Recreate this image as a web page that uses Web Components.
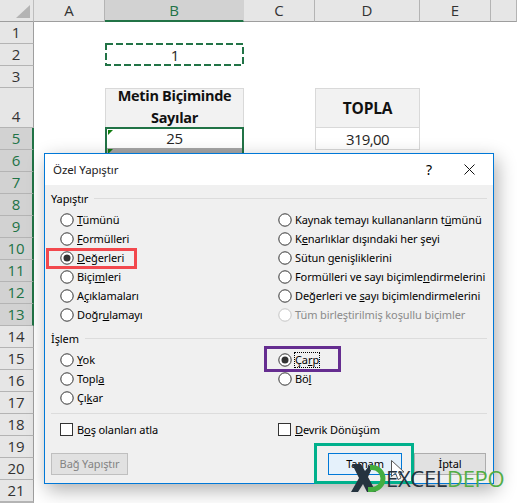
<!DOCTYPE html>
<html lang="tr">
<head>
<meta charset="utf-8">
<title>Özel Yapıştır</title>
<style>
  html, body { margin: 0; padding: 0; background: #fff; }
  body { width: 517px; height: 503px; overflow: hidden; position: relative; font-family: "Open Sans", "Noto Sans", sans-serif; }
</style>
</head>
<body>
<excel-sheet></excel-sheet>
<paste-dialog></paste-dialog>
<excel-logo></excel-logo>

<script>
const UI_FONT = '"Noto Sans", "Open Sans", sans-serif';
const SHEET_FONT = '"Open Sans", "Noto Sans", sans-serif';

/**
 * The worksheet behind the dialog: column headers, row headers and the few filled cells.
 */
class ExcelSheet extends HTMLElement {
    constructor() {
        super();
        this.attachShadow({ mode: 'open' });
    }

    connectedCallback() {
        const columns = ['A', 'B', 'C', 'D', 'E', ''];
        const rows = Array.from({ length: 22 }, (_, i) => i + 1);

        this.shadowRoot.innerHTML = `
            <style>
                :host {
                    display: block;
                    width: 517px;
                    height: 503px;
                    overflow: hidden;
                    font: 15px ${SHEET_FONT};
                    color: #262626;
                }
                .grid {
                    display: grid;
                    grid-template-columns: 34px 71px 139px 71px 105px 71px 26px;
                    grid-template-rows: 22px 22px 22px 22px 40px repeat(17, 22px) 1px;
                }
                .corner, .col, .row { background: #e6e6e6; box-sizing: border-box; }
                .corner { border-bottom: 1px solid #9e9e9e; border-right: 1px solid #bdbdbd; position: relative; }
                .corner::after {
                    content: '';
                    position: absolute;
                    right: 3px;
                    bottom: 3px;
                    border-style: solid;
                    border-width: 0 0 13px 14px;
                    border-color: transparent transparent #b4b4b4 transparent;
                }
                .col {
                    display: flex;
                    align-items: center;
                    justify-content: center;
                    border-bottom: 1px solid #9e9e9e;
                    border-right: 1px solid #b4b4b4;
                    color: #333;
                    padding-bottom: 1px;
                }
                .col.on { background: #d2d2d2; color: #217346; border-bottom: 2px solid #217346; border-right-color: #d2d2d2; }
                .row {
                    grid-column: 1;
                    display: flex;
                    align-items: flex-end;
                    justify-content: center;
                    border-bottom: 1px solid #b4b4b4;
                    border-right: 1px solid #9e9e9e;
                    color: #333;
                    line-height: 22px;
                    padding-right: 1px;
                }
                .row.on { background: #d2d2d2; color: #217346; border-right: 2px solid #217346; padding-right: 0; }
                .cell {
                    box-sizing: border-box;
                    display: flex;
                    align-items: center;
                    justify-content: center;
                    text-align: center;
                    line-height: 22px;
                }
                .copied { grid-column: 3; grid-row: 3; position: relative; padding-left: 1px; }
                .copied svg { position: absolute; left: 0; top: -1px; }
                .head { background: #f2f2f2; border: 1px solid #d9d9d9; font-weight: 700; font-size: 14.5px; letter-spacing: -.3px; color: #111; }
                .head.wrap { grid-column: 3; grid-row: 5; align-items: flex-end; border-bottom: 0; }
                .head.wrap span { margin-bottom: -1px; }
                .head.sum { grid-column: 5; grid-row: 5; font-size: 15.5px; letter-spacing: -.2px; }
                .val { border: 1px solid #d9d9d9; border-top: 0; letter-spacing: -.6px; }
                .val.sum { grid-column: 5; grid-row: 6; }
                .sel {
                    grid-column: 3;
                    grid-row: 6;
                    position: relative;
                    margin: -1px 0 0 0;
                    border: 2px solid #217346;
                    border-bottom: 0;
                    height: 30px;
                    display: block;
                    background: linear-gradient(#fff 0 19px, #a6a6a6 19px);
                    line-height: 19px;
                    letter-spacing: -.4px;
                }
                .sel::before, .sel::after {
                    content: '';
                    position: absolute;
                    left: 1px;
                    border-style: solid;
                    border-width: 5px 5px 0 0;
                    border-color: #107c10 transparent transparent transparent;
                }
                .sel::before { top: 1px; }
                .sel::after { top: 20px; }
            </style>
            <div class="grid">
                <div class="corner"></div>
                ${columns.map(c => `<div class="col ${c === 'B' ? 'on' : ''}">${c}</div>`).join('')}
                ${rows.map(r => `<div class="row ${r >= 5 && r <= 13 ? 'on' : ''}" style="grid-row:${r + 1}">${r < 22 ? r : ''}</div>`).join('')}
                <div class="cell copied">1
                    <svg width="139" height="23"><rect x="1" y="1" width="137" height="21" fill="none" stroke="#217346" stroke-width="2" stroke-dasharray="7 3"/></svg>
                </div>
                <div class="cell head wrap"><span>Metin Biçiminde<br>Sayılar</span></div>
                <div class="cell head sum">TOPLA</div>
                <div class="cell sel">25</div>
                <div class="cell val sum">319,00</div>
            </div>
        `;
    }
}

/**
 * A radio button with a label. The letter wrapped in <u> is the access key.
 * @attr checked, disabled, focused
 */
class DlgRadio extends HTMLElement {
    constructor() {
        super();
        this.attachShadow({ mode: 'open' });
    }

    connectedCallback() {
        const checked = this.hasAttribute('checked');
        this.shadowRoot.innerHTML = `
            <style>
                :host { display: flex; align-items: center; gap: 3px; height: 19px; color: #000; }
                :host([disabled]) { color: #8a8a8a; }
                svg { flex: none; }
                .text { white-space: nowrap; }
                :host([focused]) .text { outline: 1px dotted #000; outline-offset: 0; line-height: 14px; }
            </style>
            <svg width="14" height="14" viewBox="0 0 14 14">
                <circle cx="7" cy="7" r="6.2" fill="#fff" stroke="${this.hasAttribute('disabled') ? '#c4c4c4' : '#333'}" stroke-width="1"/>
                ${checked ? '<circle cx="7" cy="7" r="3.5" fill="#333"/>' : ''}
            </svg>
            <span class="text"><slot></slot></span>
        `;
    }
}

class DlgCheck extends HTMLElement {
    constructor() {
        super();
        this.attachShadow({ mode: 'open' });
        this.shadowRoot.innerHTML = `
            <style>
                :host { display: flex; align-items: center; gap: 4px; height: 19px; color: #000; }
                .box { width: 13px; height: 13px; box-sizing: border-box; background: #fff; border: 1px solid #333; }
                .text { white-space: nowrap; }
            </style>
            <span class="box"></span>
            <span class="text"><slot></slot></span>
        `;
    }
}

/** Group caption followed by a thin rule. */
class DlgGroup extends HTMLElement {
    constructor() {
        super();
        this.attachShadow({ mode: 'open' });
        this.shadowRoot.innerHTML = `
            <style>
                :host { display: block; }
                .title { display: flex; align-items: center; gap: 6px; height: 18px; }
                .title::after { content: ''; flex: 1; height: 1px; background: #dcdcdc; }
                .cols {
                    display: grid;
                    grid-template-columns: 218px 1fr;
                    padding: 3px 0 0 9px;
                }
                .col { display: flex; flex-direction: column; }
            </style>
            <div class="title"><slot name="title"></slot></div>
            <div class="cols">
                <div class="col"><slot name="left"></slot></div>
                <div class="col"><slot name="right"></slot></div>
            </div>
        `;
    }
}

class DlgButton extends HTMLElement {
    constructor() {
        super();
        this.attachShadow({ mode: 'open' });
        this.shadowRoot.innerHTML = `
            <style>
                :host {
                    display: flex;
                    align-items: center;
                    justify-content: center;
                    box-sizing: border-box;
                    height: 22px;
                    padding-bottom: 2px;
                    background: #e1e1e1;
                    border: 1px solid #adadad;
                    color: #000;
                }
                :host([disabled]) { color: #838383; border-color: #bfbfbf; }
                :host([primary]) { background: #e5f1fb; border-color: #0078d7; }
            </style>
            <slot></slot>
        `;
    }
}

/** The "Özel Yapıştır" window, with its title bar and the marked options. */
class PasteDialog extends HTMLElement {
    constructor() {
        super();
        this.attachShadow({ mode: 'open' });
        this.shadowRoot.innerHTML = `
            <style>
                :host {
                    position: absolute;
                    left: 44px;
                    top: 153px;
                    width: 450px;
                    height: 331px;
                    box-sizing: border-box;
                    border: 1px solid #0078d7;
                    background: #f0f0f0;
                    box-shadow: 3px 6px 18px rgba(0, 0, 0, .32);
                    font: 11px ${UI_FONT};
                    letter-spacing: -.1px;
                    color: #000;
                    display: flex;
                    flex-direction: column;
                }
                .bar {
                    height: 31px;
                    flex: none;
                    background: #fff;
                    display: flex;
                    align-items: center;
                    padding: 0 0 0 8px;
                }
                .bar .name { flex: 1; font-size: 11.5px; color: #222; }
                .bar .help { font-size: 14px; width: 20px; margin-right: 25px; text-align: center; }
                .bar svg { margin-right: 18px; }
                .body { padding: 4px 6px 0 6px; display: flex; flex-direction: column; flex: 1; }
                .sep { height: 1px; background: #dcdcdc; margin: 6px 0 0 0; }
                .checks {
                    display: grid;
                    grid-template-columns: 218px 1fr;
                    padding: 6px 0 0 9px;
                }
                .actions { display: flex; margin-top: 14px; }
                .actions .link { width: 77px; }
                .actions .ok { width: 74px; margin-left: 200px; }
                .actions .cancel { width: 72px; margin-left: 12px; }
                .mark { position: absolute; box-sizing: border-box; border: 3px solid; }
                .mark.red { left: 1px; top: 94px; width: 91px; height: 21px; border-color: #f2484d; }
                .mark.purple { left: 219px; top: 192px; width: 77px; height: 26px; border-color: #652d90; }
                .mark.teal { left: 269px; top: 289px; width: 100px; height: 41px; border-color: #00b08c; }
                .group2 { margin-top: 5px; }
            </style>
            <div class="bar">
                <span class="name">Özel Yapıştır</span>
                <span class="help">?</span>
                <svg width="11" height="11" viewBox="0 0 11 11"><path d="M.5.5l10 10M10.5.5l-10 10" stroke="#111" fill="none"/></svg>
            </div>
            <div class="body">
                <dlg-group>
                    <span slot="title">Yapıştır</span>
                    <dlg-radio slot="left"><u>T</u>ümünü</dlg-radio>
                    <dlg-radio slot="left"><u>F</u>ormülleri</dlg-radio>
                    <dlg-radio slot="left" checked><u>D</u>eğerleri</dlg-radio>
                    <dlg-radio slot="left">Biçi<u>m</u>leri</dlg-radio>
                    <dlg-radio slot="left">A<u>ç</u>ıklamaları</dlg-radio>
                    <dlg-radio slot="left">Doğr<u>u</u>lamayı</dlg-radio>
                    <dlg-radio slot="right">Kaynak temayı kullananların t<u>ü</u>münü</dlg-radio>
                    <dlg-radio slot="right">K<u>e</u>narlıklar dışındaki her şeyi</dlg-radio>
                    <dlg-radio slot="right">Sütun <u>g</u>enişliklerini</dlg-radio>
                    <dlg-radio slot="right">Formülleri ve sayı biçimle<u>n</u>dirmelerini</dlg-radio>
                    <dlg-radio slot="right">Değerleri ve <u>s</u>ayı biçimlendirmelerini</dlg-radio>
                    <dlg-radio slot="right" disabled>Tüm birleştirilmiş koşullu biçimler</dlg-radio>
                </dlg-group>
                <dlg-group class="group2">
                    <span slot="title">İşlem</span>
                    <dlg-radio slot="left"><u>Y</u>ok</dlg-radio>
                    <dlg-radio slot="left">Topl<u>a</u></dlg-radio>
                    <dlg-radio slot="left">Çı<u>k</u>ar</dlg-radio>
                    <dlg-radio slot="right" checked focused>Ça<u>r</u>p</dlg-radio>
                    <dlg-radio slot="right">Bö<u>l</u></dlg-radio>
                </dlg-group>
                <div class="sep"></div>
                <div class="checks">
                    <dlg-check>B<u>o</u>ş olanları atla</dlg-check>
                    <dlg-check><u>D</u>evrik Dönüşüm</dlg-check>
                </div>
                <div class="actions">
                    <dlg-button class="link" disabled>Bağ Yapıştır</dlg-button>
                    <dlg-button class="ok" primary>Tamam</dlg-button>
                    <dlg-button class="cancel">İptal</dlg-button>
                </div>
            </div>
            <div class="mark red"></div>
            <div class="mark purple"></div>
            <div class="mark teal"></div>
        `;
    }
}

/** Watermark in the bottom right corner, with the mouse pointer behind it. */
class ExcelLogo extends HTMLElement {
    constructor() {
        super();
        this.attachShadow({ mode: 'open' });
        this.shadowRoot.innerHTML = `
            <style>
                :host {
                    position: absolute;
                    z-index: 0;
                    left: 351px;
                    top: 463px;
                    width: 160px;
                    height: 30px;
                    display: flex;
                    align-items: center;
                    font: 22px "Open Sans", sans-serif;
                    letter-spacing: -.3px;
                    color: #25333f;
                }
                svg.mark { flex: none; margin-right: 0; }
                .depo { color: #52ad45; }
                svg.cursor { position: absolute; left: 40px; top: -3px; z-index: -1; }
            </style>
            <svg class="mark" width="35" height="30" viewBox="0 0 35 30">
                <path d="M1 1H10L14 8 18 3H22L17 14 25 29H16L12 21 7 29H0L8 15Z" fill="#25333f"/>
                <path d="M19 2H21A13.500 13.500 0 0 1 21 29H17V24H21A8.500 8.500 0 0 0 21 7H19Z" fill="#43ad3f"/>
            </svg>
            <span>EXCEL</span><span class="depo">DEPO</span>
            <svg class="cursor" width="16" height="24" viewBox="0 0 16 24">
                <path d="M.5.500v16l4-3.500 2.500 6.500 3-1.500-2.500-6h5.500z" fill="#fff" stroke="#555"/>
            </svg>
        `;
    }
}

customElements.define('excel-sheet', ExcelSheet);
customElements.define('dlg-radio', DlgRadio);
customElements.define('dlg-check', DlgCheck);
customElements.define('dlg-group', DlgGroup);
customElements.define('dlg-button', DlgButton);
customElements.define('paste-dialog', PasteDialog);
customElements.define('excel-logo', ExcelLogo);
</script>
</body>
</html>
